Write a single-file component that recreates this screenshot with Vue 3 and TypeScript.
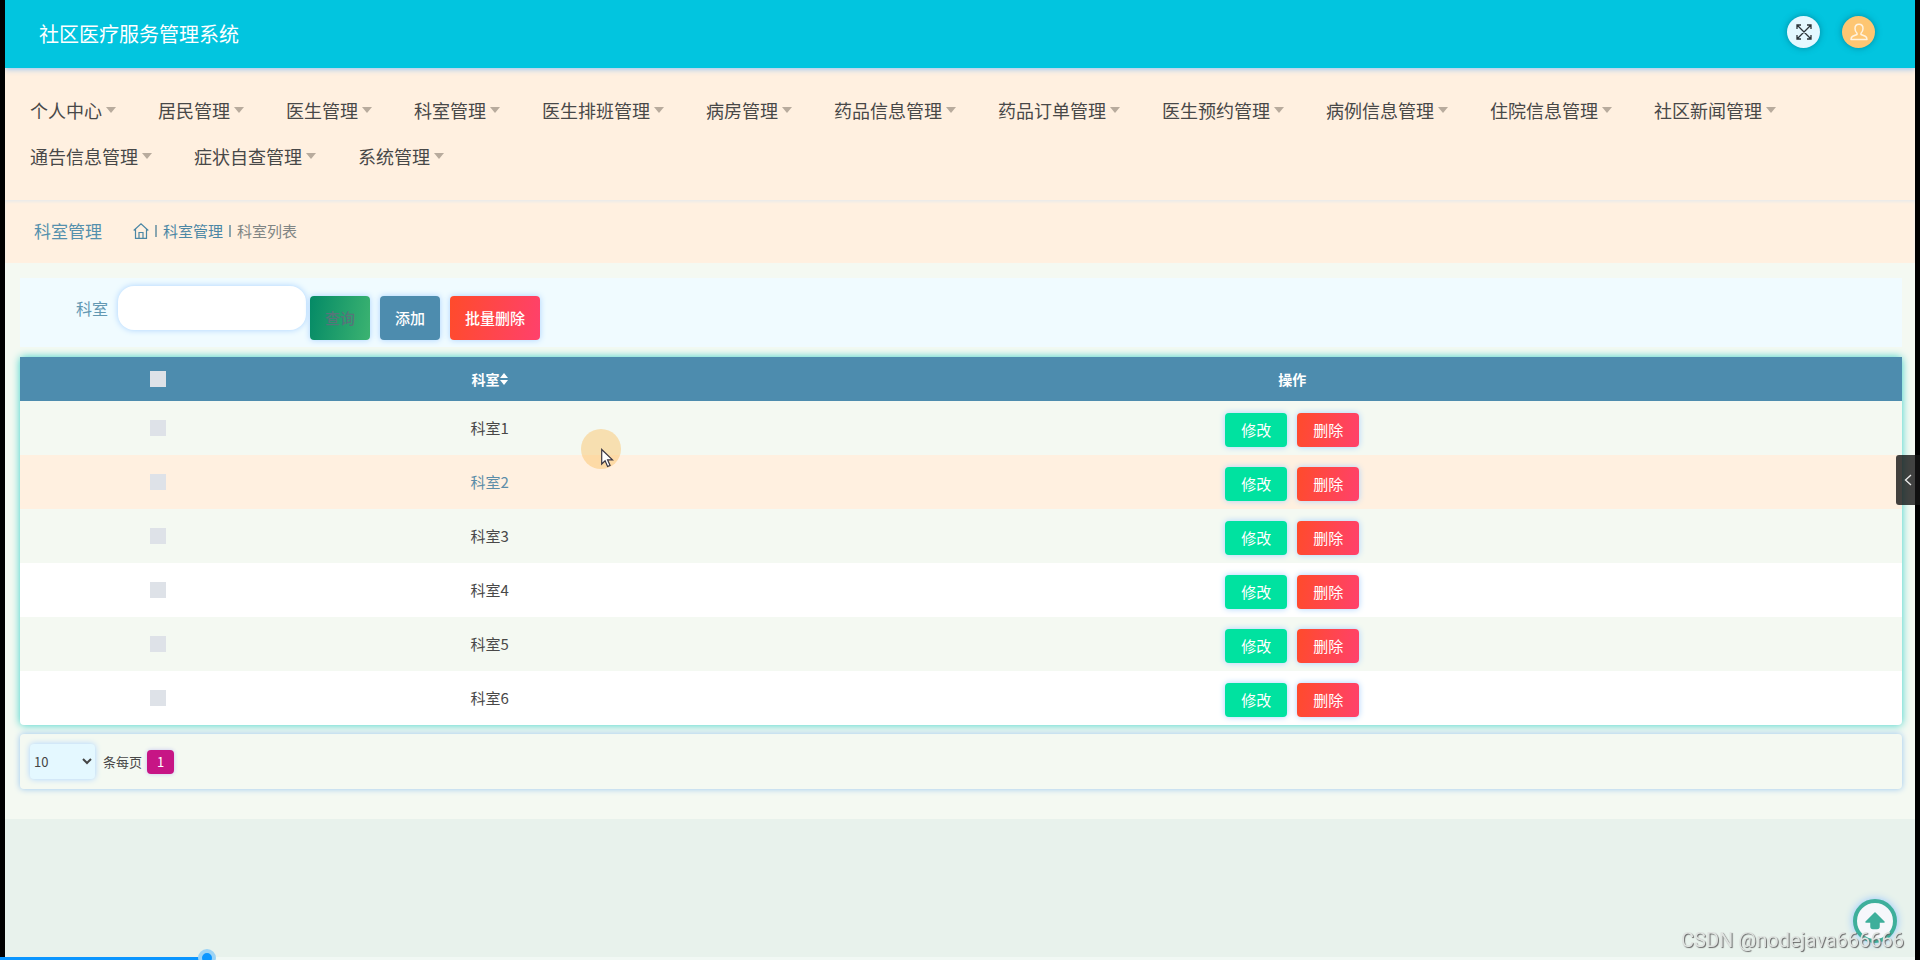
<script setup lang="ts">
import { ref } from 'vue'

interface Department {
  id: number
  name: string
}

const menus: string[] = [
  '个人中心', '居民管理', '医生管理', '科室管理', '医生排班管理', '病房管理',
  '药品信息管理', '药品订单管理', '医生预约管理', '病例信息管理', '住院信息管理',
  '社区新闻管理', '通告信息管理', '症状自查管理', '系统管理',
]

const departments: Department[] = [1, 2, 3, 4, 5, 6].map((id) => ({ id, name: `科室${id}` }))

const keyword = ref('')
const pageSize = ref(10)
const selected = ref<number[]>([])
const activeId = ref(2)

function toggleAll(event: Event) {
  const checked = (event.target as HTMLInputElement).checked
  selected.value = checked ? departments.map((d) => d.id) : []
}
</script>

<template>
  <div class="page">
    <header class="topbar">
      <h1>社区医疗服务管理系统</h1>
      <div class="tools">
        <button type="button" class="round" aria-label="全屏">
          <svg width="16" height="16" viewBox="0 0 16 16" fill="none" stroke="#2b3338" stroke-width="1.3">
            <path d="M1.5 1.5 14.5 14.5M14.5 1.5 1.5 14.5M1 5V1h4M11 1h4v4M15 11v4h-4M5 15H1v-4" />
          </svg>
        </button>
        <button type="button" class="round user" aria-label="用户">
          <svg width="18" height="18" viewBox="0 0 18 18" fill="none" stroke="#fff3df" stroke-width="1.5" stroke-linejoin="round">
            <path d="M7 10.2C5.6 9 5 7.3 5 5.5 5 2.6 6.6 1.2 9 1.2s4 1.4 4 4.3c0 1.8-.6 3.5-2 4.7v1.3l4.3 1.7c1.2.5 1.7 1.8 1.7 3.3H1c0-1.5.5-2.8 1.7-3.3L7 11.5z" />
          </svg>
        </button>
      </div>
    </header>

    <nav class="menu">
      <a v-for="m in menus" :key="m" href="#">{{ m }}<i class="caret"></i></a>
    </nav>

    <div class="crumbs">
      <h2>科室管理</h2>
      <ol>
        <li>
          <a href="#" aria-label="首页">
            <svg width="16" height="16" viewBox="0 0 16 16" fill="none" stroke="currentColor" stroke-width="1.2">
              <path d="M.7 7.5 8 .9l7.3 6.6M2.5 6v9.3h11V6M6 15V9.5h4V15" />
            </svg>
          </a>
        </li>
        <li><a href="#">科室管理</a></li>
        <li>科室列表</li>
      </ol>
    </div>

    <main>
      <form class="search" @submit.prevent>
        <label for="keyword">科室</label>
        <input id="keyword" v-model="keyword" type="text" />
        <div class="actions">
          <button type="submit" class="query">查询</button>
          <button type="button" class="add">添加</button>
          <button type="button" class="danger">批量删除</button>
        </div>
      </form>

      <table>
        <colgroup>
          <col class="col-check" />
          <col class="col-name" />
          <col />
        </colgroup>
        <thead>
          <tr>
            <th><input type="checkbox" aria-label="全选" @change="toggleAll" /></th>
            <th>
              <span class="sortable">科室<svg width="8" height="14" viewBox="0 0 8 14" fill="currentColor"><path d="M4 1 8 6H0zM4 13 0 8h8z" /></svg></span>
            </th>
            <th>操作</th>
          </tr>
        </thead>
        <tbody>
          <tr v-for="d in departments" :key="d.id" :class="{ active: d.id === activeId }">
            <td><input v-model="selected" type="checkbox" :value="d.id" :aria-label="d.name" /></td>
            <td>{{ d.name }}</td>
            <td>
              <div class="ops">
                <button type="button" class="edit">修改</button>
                <button type="button" class="danger">删除</button>
              </div>
            </td>
          </tr>
        </tbody>
      </table>

      <div class="pager">
        <select id="size" v-model="pageSize">
          <option :value="10">10</option>
          <option :value="25">25</option>
          <option :value="50">50</option>
        </select>
        <label for="size">条每页</label>
        <button type="button" class="current">1</button>
      </div>
    </main>

    <button type="button" class="to-top" aria-label="返回顶部">
      <svg width="20" height="18" viewBox="0 0 20 18" fill="#3eaf9b" stroke="#3eaf9b" stroke-width="1.5" stroke-linejoin="round">
        <path d="M10 1 19 10H14v4.5q0 2-2 2H8q-2 0-2-2V10H1z" />
      </svg>
    </button>
    <button type="button" class="drawer" aria-label="展开">
      <svg width="8" height="12" viewBox="0 0 8 12" fill="none" stroke="#eee" stroke-width="1.3"><path d="M7 1 1.5 6 7 11" /></svg>
    </button>

    <div class="pointer">
      <svg width="13" height="20" viewBox="0 0 13 20" fill="#fff" stroke="#3a3540" stroke-width="1.2">
        <path d="M.7 1.5V16l3.4-3.2 2.5 5.7 2.5-1.1-2.5-5.5h4.9z" />
      </svg>
    </div>

    <div class="progress"><span class="played"></span></div>
    <span class="credit">CSDN @nodejava666666</span>
  </div>
</template>

<style>
body {
  margin: 0;
  background: #000;
}
</style>

<style scoped>
* {
  box-sizing: border-box;
}
.page {
  min-height: 100vh;
  margin: 0 5px;
  overflow-x: clip;
  background: #e8f2ec;
  color: #484848;
  font: 15px/22px "Noto Sans CJK SC", sans-serif;
}
a {
  color: inherit;
  text-decoration: none;
}
h1,
h2 {
  margin: 0;
  font-weight: 400;
}
button {
  padding: 0;
  border: 0;
  font: inherit;
}
svg {
  display: block;
}
.topbar {
  position: relative;
  display: flex;
  align-items: flex-start;
  justify-content: space-between;
  height: 68px;
  padding: 16px 40px 0 34px;
  background: #02c5df;
  box-shadow: 0 1px 6px #8fc0f4;
}
h1 {
  color: #fff;
  font-size: 20px;
  line-height: 36px;
}
.tools {
  display: flex;
  gap: 22px;
}
.round {
  display: grid;
  place-items: center;
  width: 33px;
  height: 32px;
  border-radius: 50%;
  background: #e4f8ff;
  box-shadow: 0 0 6px rgba(0, 80, 100, 0.5);
}
.user {
  background: #fec672;
}
.menu {
  display: flex;
  flex-wrap: wrap;
  gap: 0 42px;
  padding: 19px 25px 21px;
  background: #fff0e0;
}
.menu a {
  display: flex;
  align-items: center;
  gap: 4px;
  font-size: 18px;
  line-height: 46px;
}
.caret {
  border: 5px solid transparent;
  border-top: 6px solid #b8ab9d;
  border-bottom: 0;
}
.crumbs {
  display: flex;
  align-items: center;
  gap: 31px;
  padding: 19px 29px 20px;
  background: #fff0e0;
  box-shadow: inset 0 2px 3px #ebebe9;
  color: #808584;
}
h2 {
  color: #5590ad;
  font-size: 17px;
  line-height: 24px;
}
ol {
  display: flex;
  align-items: center;
  margin: 0;
  padding: 0;
  list-style: none;
}
li {
  display: flex;
  align-items: center;
}
li + li::before {
  content: "";
  height: 12px;
  margin: 0 6px;
  border-left: 2px solid #8aa6b0;
}
li a {
  color: #4b87a5;
}
main {
  padding: 15px 13px 30px 15px;
  background: #f4f9f2;
}
.search {
  display: flex;
  align-items: flex-start;
  padding: 8px 56px 7px;
  background: #f0fbff;
}
.search label {
  color: #6297b2;
  font-size: 16px;
  line-height: 44px;
}
.search input {
  width: 188px;
  height: 44px;
  margin: 0 4px 0 10px;
  padding: 0 12px;
  border: 0;
  border-radius: 16px;
  background: #fff;
  box-shadow: 0 0 6px #a8d2ff;
  font: inherit;
}
.actions {
  display: flex;
  gap: 10px;
  padding-top: 10px;
}
.actions button {
  padding: 0 15px;
  border-radius: 4px;
  box-shadow: 0 0 6px #a8d2ff;
  color: #fff;
  font-weight: 500;
  line-height: 44px;
}
.actions .query {
  background: linear-gradient(100deg, #048a66, #3cb371);
  color: #56757a;
}
.actions .add {
  background: #4d8cae;
}
.danger {
  background: linear-gradient(100deg, #ff4b2b, #ff416c);
}
table {
  width: 100%;
  margin-top: 10px;
  border-collapse: separate;
  border-spacing: 0;
  border-radius: 4px;
  background: #fff;
  box-shadow: 0 0 8px #35d0c8;
  table-layout: fixed;
  text-align: center;
}
.col-check {
  width: 14.7%;
}
.col-name {
  width: 20.5%;
}
th {
  height: 44px;
  padding: 0;
  background: #4d8cae;
  color: #fff;
  font-size: 14px;
  font-weight: 700;
}
.sortable {
  display: inline-flex;
  align-items: center;
}
td {
  height: 54px;
  padding: 0;
}
tbody tr:nth-child(odd) {
  background: #f4f9f2;
}
tbody tr.active {
  background: #fff0e0;
  color: #5b8da8;
}
input[type="checkbox"] {
  display: block;
  width: 16px;
  height: 16px;
  margin: 0 auto;
  appearance: none;
  background: #dee2e8;
}
tbody tr:last-child td:first-child {
  border-bottom-left-radius: 4px;
}
.ops {
  display: flex;
  justify-content: center;
  gap: 10px;
  padding-top: 4px;
}
.ops button {
  padding: 0 16px;
  border-radius: 4px;
  box-shadow: 0 0 6px #a8d2ff;
  color: #fff;
  line-height: 34px;
}
.ops .edit {
  background: #00e2a0;
}
.pager {
  display: flex;
  align-items: center;
  margin-top: 9px;
  padding: 10px;
  border-radius: 4px;
  box-shadow: 0 0 6px #96c4ee;
  font-size: 13px;
}
.pager select {
  width: 65px;
  height: 35px;
  border: 0;
  border-radius: 4px;
  background: #e4f8ff;
  box-shadow: 0 0 6px #a8d2ff;
  color: #444;
  font: inherit;
}
.pager label {
  margin: 0 5px 0 8px;
}
.current {
  padding: 0 10px;
  border-radius: 4px;
  background: #c71585;
  box-shadow: 0 0 4px #c5c6f0;
  color: #fff;
  line-height: 24px;
}
.to-top {
  position: fixed;
  right: 23px;
  bottom: 17px;
  display: grid;
  place-items: center;
  width: 44px;
  height: 44px;
  border: 4px solid #3eaf9b;
  border-radius: 50%;
  background: #f6f7fb;
  box-shadow: 0 0 8px #8fc4ff;
}
.drawer {
  position: fixed;
  top: 455px;
  right: 0;
  display: grid;
  place-items: center;
  width: 24px;
  height: 50px;
  border-radius: 3px 0 0 3px;
  background: rgba(20, 20, 20, 0.8);
}
.pointer {
  position: absolute;
  top: 429px;
  left: 581px;
  width: 40px;
  height: 40px;
  padding: 19px 0 0 20px;
  border-radius: 50%;
  background: rgba(250, 190, 95, 0.45);
}
.progress {
  position: fixed;
  right: 5px;
  bottom: 0;
  left: 0;
  height: 3px;
  background: #f1f8f4;
}
.played {
  display: block;
  width: 207px;
  height: 3px;
  background: #0a96ff;
}
.played::after {
  position: absolute;
  top: -8px;
  left: 198px;
  width: 10px;
  height: 10px;
  border: 4px solid #9bd3f5;
  border-radius: 50%;
  background: #0a96ff;
  content: "";
}
.credit {
  position: fixed;
  right: 16px;
  bottom: 8px;
  color: #dfe3e0;
  font: 20px/24px Roboto, sans-serif;
  text-shadow: 1px 1px 1px #666;
}
</style>
